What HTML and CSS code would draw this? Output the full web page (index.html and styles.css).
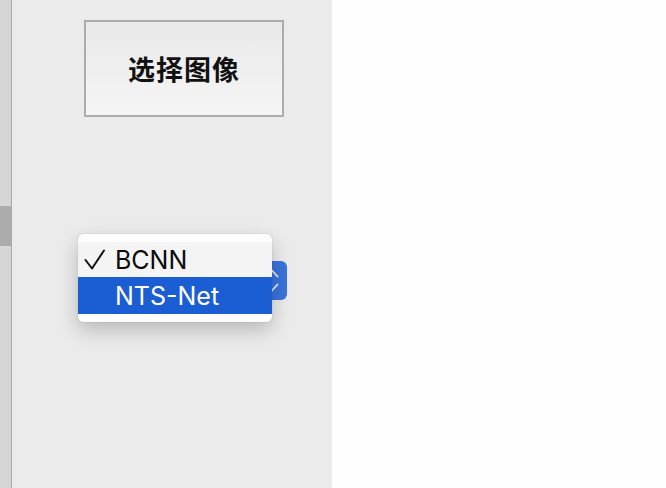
FILE: index.html
```html
<!DOCTYPE html>
<html lang="zh">
<head>
<meta charset="utf-8">
<link rel="stylesheet" href="styles.css">
</head>
<body>
<div class="app">
  <div class="strip"><div class="thumb"></div></div>
  <div class="panel">
    <button class="choose">选择图像</button>
    <div class="popup-area">
      <div class="popup-btn">
        <svg class="arrows" width="32" height="39" viewBox="0 0 32 39">
          <path d="M11.5 15.5 L17 9.5 L22.5 15.5" fill="none" stroke="#fff" stroke-width="1.8" stroke-linecap="round" stroke-linejoin="round" opacity="0.9"/>
          <path d="M11.5 23.5 L17 29.5 L22.5 23.5" fill="none" stroke="#fff" stroke-width="1.8" stroke-linecap="round" stroke-linejoin="round" opacity="0.9"/>
        </svg>
      </div>
      <div class="menu">
        <div class="item checked">
          <span class="check">
            <svg width="24" height="35" viewBox="0 0 24 35">
              <path d="M1.5 18 L8 26.5 L20 8.5" fill="none" stroke="#111" stroke-width="2" stroke-linecap="round" stroke-linejoin="round"/>
            </svg>
          </span>
          <span class="label">BCNN</span>
        </div>
        <div class="item active"><span class="check"></span><span class="label">NTS-Net</span></div>
      </div>
    </div>
  </div>
  <div class="main"></div>
</div>
</body>
</html>
```
FILE: styles.css
```css
html, body {
  margin: 0;
  padding: 0;
  width: 666px;
  height: 488px;
  overflow: hidden;
}
body {
  font-family: "Inter", "Liberation Sans", "Noto Sans CJK SC", sans-serif;
}
.app {
  display: flex;
  height: 488px;
}
.strip {
  width: 11px;
  background: #d6d6d6;
  border-right: 1px solid #a9a9a9;
  display: flex;
  flex-direction: column;
}
.thumb {
  margin-top: 206px;
  height: 40px;
  background: #acacac;
}
.panel {
  width: 320px;
  background: #ebebeb;
  display: flex;
  flex-direction: column;
}
.main {
  flex: 1;
  background: #fefefe;
}
.choose {
  margin: 20px 0 0 72px;
  width: 200px;
  height: 97px;
  border: 2px solid #acacac;
  background: linear-gradient(#e9e9e9, #f5f5f5);
  font-family: "Noto Sans CJK SC", sans-serif;
  font-weight: 700;
  font-size: 27px;
  color: #111;
  padding: 0;
  letter-spacing: 1px;
}
.popup-area {
  position: relative;
  height: 300px;
}
.popup-btn {
  position: absolute;
  left: 243px;
  top: 144px;
  width: 32px;
  height: 39px;
  border-radius: 6px;
  background: #3b74dd;
}
.arrows {
  display: block;
}
.menu {
  position: absolute;
  left: 66px;
  top: 117px;
  width: 194px;
  padding: 8px 0;
  background: #fdfdfd;
  border-radius: 5px;
  box-shadow: 0 0 1px rgba(0,0,0,0.35), 0 8px 20px rgba(0,0,0,0.22);
}
.item {
  display: flex;
  align-items: center;
  font-size: 25px;
  color: #0a0a0a;
}
.item.checked {
  height: 35px;
  background: #f4f4f4;
}
.item.active {
  height: 37px;
  background: #1b5dd3;
  color: #fff;
}
.check {
  width: 30px;
  padding-left: 6px;
  height: 35px;
  display: flex;
}
.label {
  padding-left: 1px;
}
```
